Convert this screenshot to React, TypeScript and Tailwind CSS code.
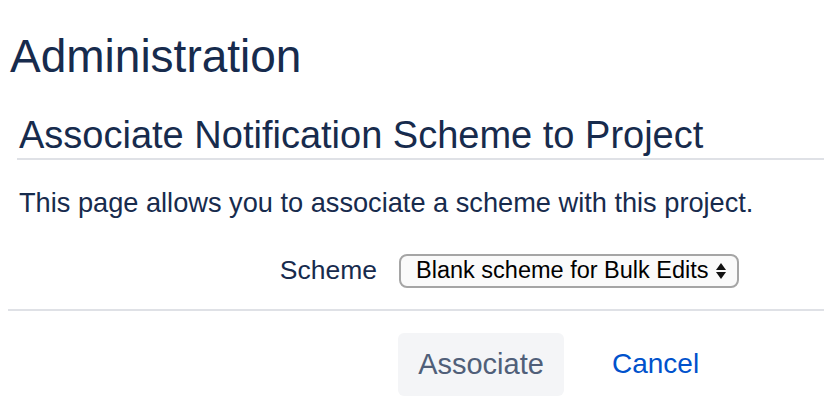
export default function App() {
  return (
    <div className="min-h-[420px] w-[824px] bg-white text-[#172b4d]" style={{ fontFamily: '"Liberation Sans", Arial, sans-serif' }}>
      <div className="pl-[10px] pt-[28px]">
        <h1 className="text-[46px] leading-[56px] font-normal">Administration</h1>
      </div>

      <div className="mt-[30px] pl-[17px]">
        <h2 className="border-b-2 border-[#dfe1e6] pb-[2px] pl-[2px] text-[38px] leading-[42px]">
          Associate Notification Scheme to Project
        </h2>
        <p className="mt-[26px] pl-[2px] text-[27.2px] leading-[34px]">
          This page allows you to associate a scheme with this project.
        </p>
      </div>

      <div className="mt-[31px] flex items-center pl-[8px]">
        <label className="w-[391px] pr-[22px] text-right text-[26.5px]">Scheme</label>
        <div className="flex h-[34px] w-[340px] items-center justify-between rounded-[8px] border-2 border-[#a5a5a5] bg-[#fafafa] pl-[15px] pr-[10px] text-[23.5px] text-black">
          <span>Blank scheme for Bulk Edits</span>
          <svg width="12" height="20" viewBox="0 0 12 20">
            <path d="M6 2 L11 9 L1 9 Z" fill="#111" />
            <path d="M6 18 L11 11 L1 11 Z" fill="#111" />
          </svg>
        </div>
      </div>

      <div className="mt-[18px] ml-[8px] border-t-2 border-[#dfe1e6]" />

      <div className="mt-[22px] flex items-center pl-[398px]">
        <button className="h-[63px] w-[166px] rounded-[6px] bg-[#f4f5f7] text-[29px] text-[#505f79]">Associate</button>
        <a className="ml-[48px] text-[28px] text-[#0052cc]">Cancel</a>
      </div>
    </div>
  );
}
